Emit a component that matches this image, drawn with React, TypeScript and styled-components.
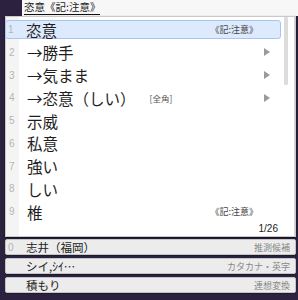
import React from "react";
import styled, { createGlobalStyle } from "styled-components";

const GlobalStyle = createGlobalStyle`
  html, body {
    margin: 0;
    padding: 0;
    background: #2c2240;
  }
  body {
    font-family: "Noto Sans CJK JP", "Noto Sans", sans-serif;
  }
`;

interface Candidate {
  text: string;
  note?: string;
  sub?: boolean;
  tag?: string;
}

const candidates: Candidate[] = [
  { text: "恣意", note: "《記:注意》" },
  { text: "→勝手", sub: true },
  { text: "→気まま", sub: true },
  { text: "→恣意（しい）", tag: "[全角]", sub: true },
  { text: "示威" },
  { text: "私意" },
  { text: "強い" },
  { text: "しい" },
  { text: "椎", note: "《記:注意》" },
];

const extras = [
  { num: "0", text: "志井（福岡）", label: "推測候補" },
  { num: "", text: "シイ,ｼｲ…", label: "カタカナ・英字" },
  { num: "", text: "積もり", label: "連想変換" },
];

const Arrow = () => (
  <svg width="6" height="8" viewBox="0 0 6 8">
    <path d="M0 0 L6 4 L0 8 Z" fill="#9a9a9a" />
  </svg>
);

export default function App() {
  return (
    <Page>
      <GlobalStyle />
      <TopBar>
        <TopGap />
        <Field>
          <Composing>恣意《記:注意》</Composing>
        </Field>
      </TopBar>
      <Panel>
        <List>
          {candidates.map((c, i) => (
            <Row key={i} $selected={i === 0}>
              <Num>{i + 1}</Num>
              <Word>{c.text}</Word>
              {c.tag && <Tag>{c.tag}</Tag>}
              <Spacer />
              {c.note && <Note>{c.note}</Note>}
              <ArrowBox>{c.sub && <Arrow />}</ArrowBox>
            </Row>
          ))}
          <Pager>1/26</Pager>
        </List>
        <ScrollTrack>
          <Thumb />
        </ScrollTrack>
      </Panel>
      <Extras>
        {extras.map((e, i) => (
          <ExtraRow key={i}>
            <Num>{e.num}</Num>
            <ExtraWord>{e.text}</ExtraWord>
            <Spacer />
            <ExtraLabel>{e.label}</ExtraLabel>
          </ExtraRow>
        ))}
      </Extras>
    </Page>
  );
}

const Page = styled.div`
  width: 298px;
  height: 300px;
  overflow: hidden;
  background: #2c2240;
  display: flex;
  flex-direction: column;
`;

const TopBar = styled.div`
  height: 16px;
  display: flex;
`;

const TopGap = styled.div`
  width: 22px;
`;

const Field = styled.div`
  flex: 1;
  background: #f7f7f7;
  padding-left: 2px;
  display: flex;
  align-items: flex-start;
`;

const Composing = styled.span`
  font-size: 10.5px;
  line-height: 14px;
  color: #222;
  border-bottom: 1.5px solid #111;
  white-space: nowrap;
`;

const Panel = styled.div`
  margin-left: 5px;
  width: 291px;
  height: 221px;
  box-sizing: border-box;
  background: #fff;
  border: 1px solid #c9c9c9;
  box-shadow: 0 1px 2px rgba(0, 0, 0, 0.6);
  display: flex;
`;

const List = styled.div`
  flex: 1;
  display: flex;
  flex-direction: column;
  padding-top: 1px;
  background: linear-gradient(to right, #f4f4f4 0, #f4f4f4 13px, #fff 13px);
`;

const Row = styled.div<{ $selected?: boolean }>`
  height: 19px;
  margin: 2px 0 1.75px;
  box-sizing: border-box;
  display: flex;
  align-items: center;
  border: 1px solid ${(p) => (p.$selected ? "#a9c5ef" : "transparent")};
  border-radius: 3px;
  background: ${(p) => (p.$selected ? "#dde9fc" : "transparent")};
  margin-left: ${(p) => (p.$selected ? "-1px" : "0")};
`;

const Num = styled.span`
  width: 18px;
  padding-left: 2px;
  font-family: "Liberation Sans", sans-serif;
  font-size: 10px;
  color: #b4b4b4;
`;

const Word = styled.span`
  font-size: 15.5px;
  color: #1e1e1e;
  white-space: nowrap;
`;

const Tag = styled.span`
  font-size: 8.5px;
  color: #555;
  margin-left: 14px;
`;

const Spacer = styled.span`
  flex: 1;
`;

const Note = styled.span`
  font-size: 9px;
  color: #444;
  margin-right: 6px;
`;

const ArrowBox = styled.span`
  width: 16px;
  display: flex;
  align-items: center;
`;

const Pager = styled.div`
  margin-top: auto;
  height: 18px;
  padding-right: 3px;
  text-align: right;
  font-family: "Liberation Sans", sans-serif;
  font-size: 10px;
  color: #222;
`;

const ScrollTrack = styled.div`
  width: 9px;
  padding: 0 1px 0 3px;
  border-right: 1px solid #d8d8d8;
`;

const Thumb = styled.div`
  width: 4px;
  height: 68px;
  background: #dcdcdc;
  border-radius: 1px;
`;

const Extras = styled.div`
  margin-top: 2px;
  margin-left: 5px;
  width: 291px;
  display: flex;
  flex-direction: column;
  gap: 3px;
`;

const ExtraRow = styled.div`
  height: 16px;
  box-sizing: border-box;
  display: flex;
  align-items: center;
  background: #ececec;
  border: 1px solid #c4c4c4;
  border-radius: 2px;
  box-shadow: 0 1px 1px rgba(0, 0, 0, 0.3);
`;

const ExtraWord = styled.span`
  font-size: 11.5px;
  color: #222;
`;

const ExtraLabel = styled.span`
  font-size: 9px;
  color: #888;
  margin-right: 5px;
`;
